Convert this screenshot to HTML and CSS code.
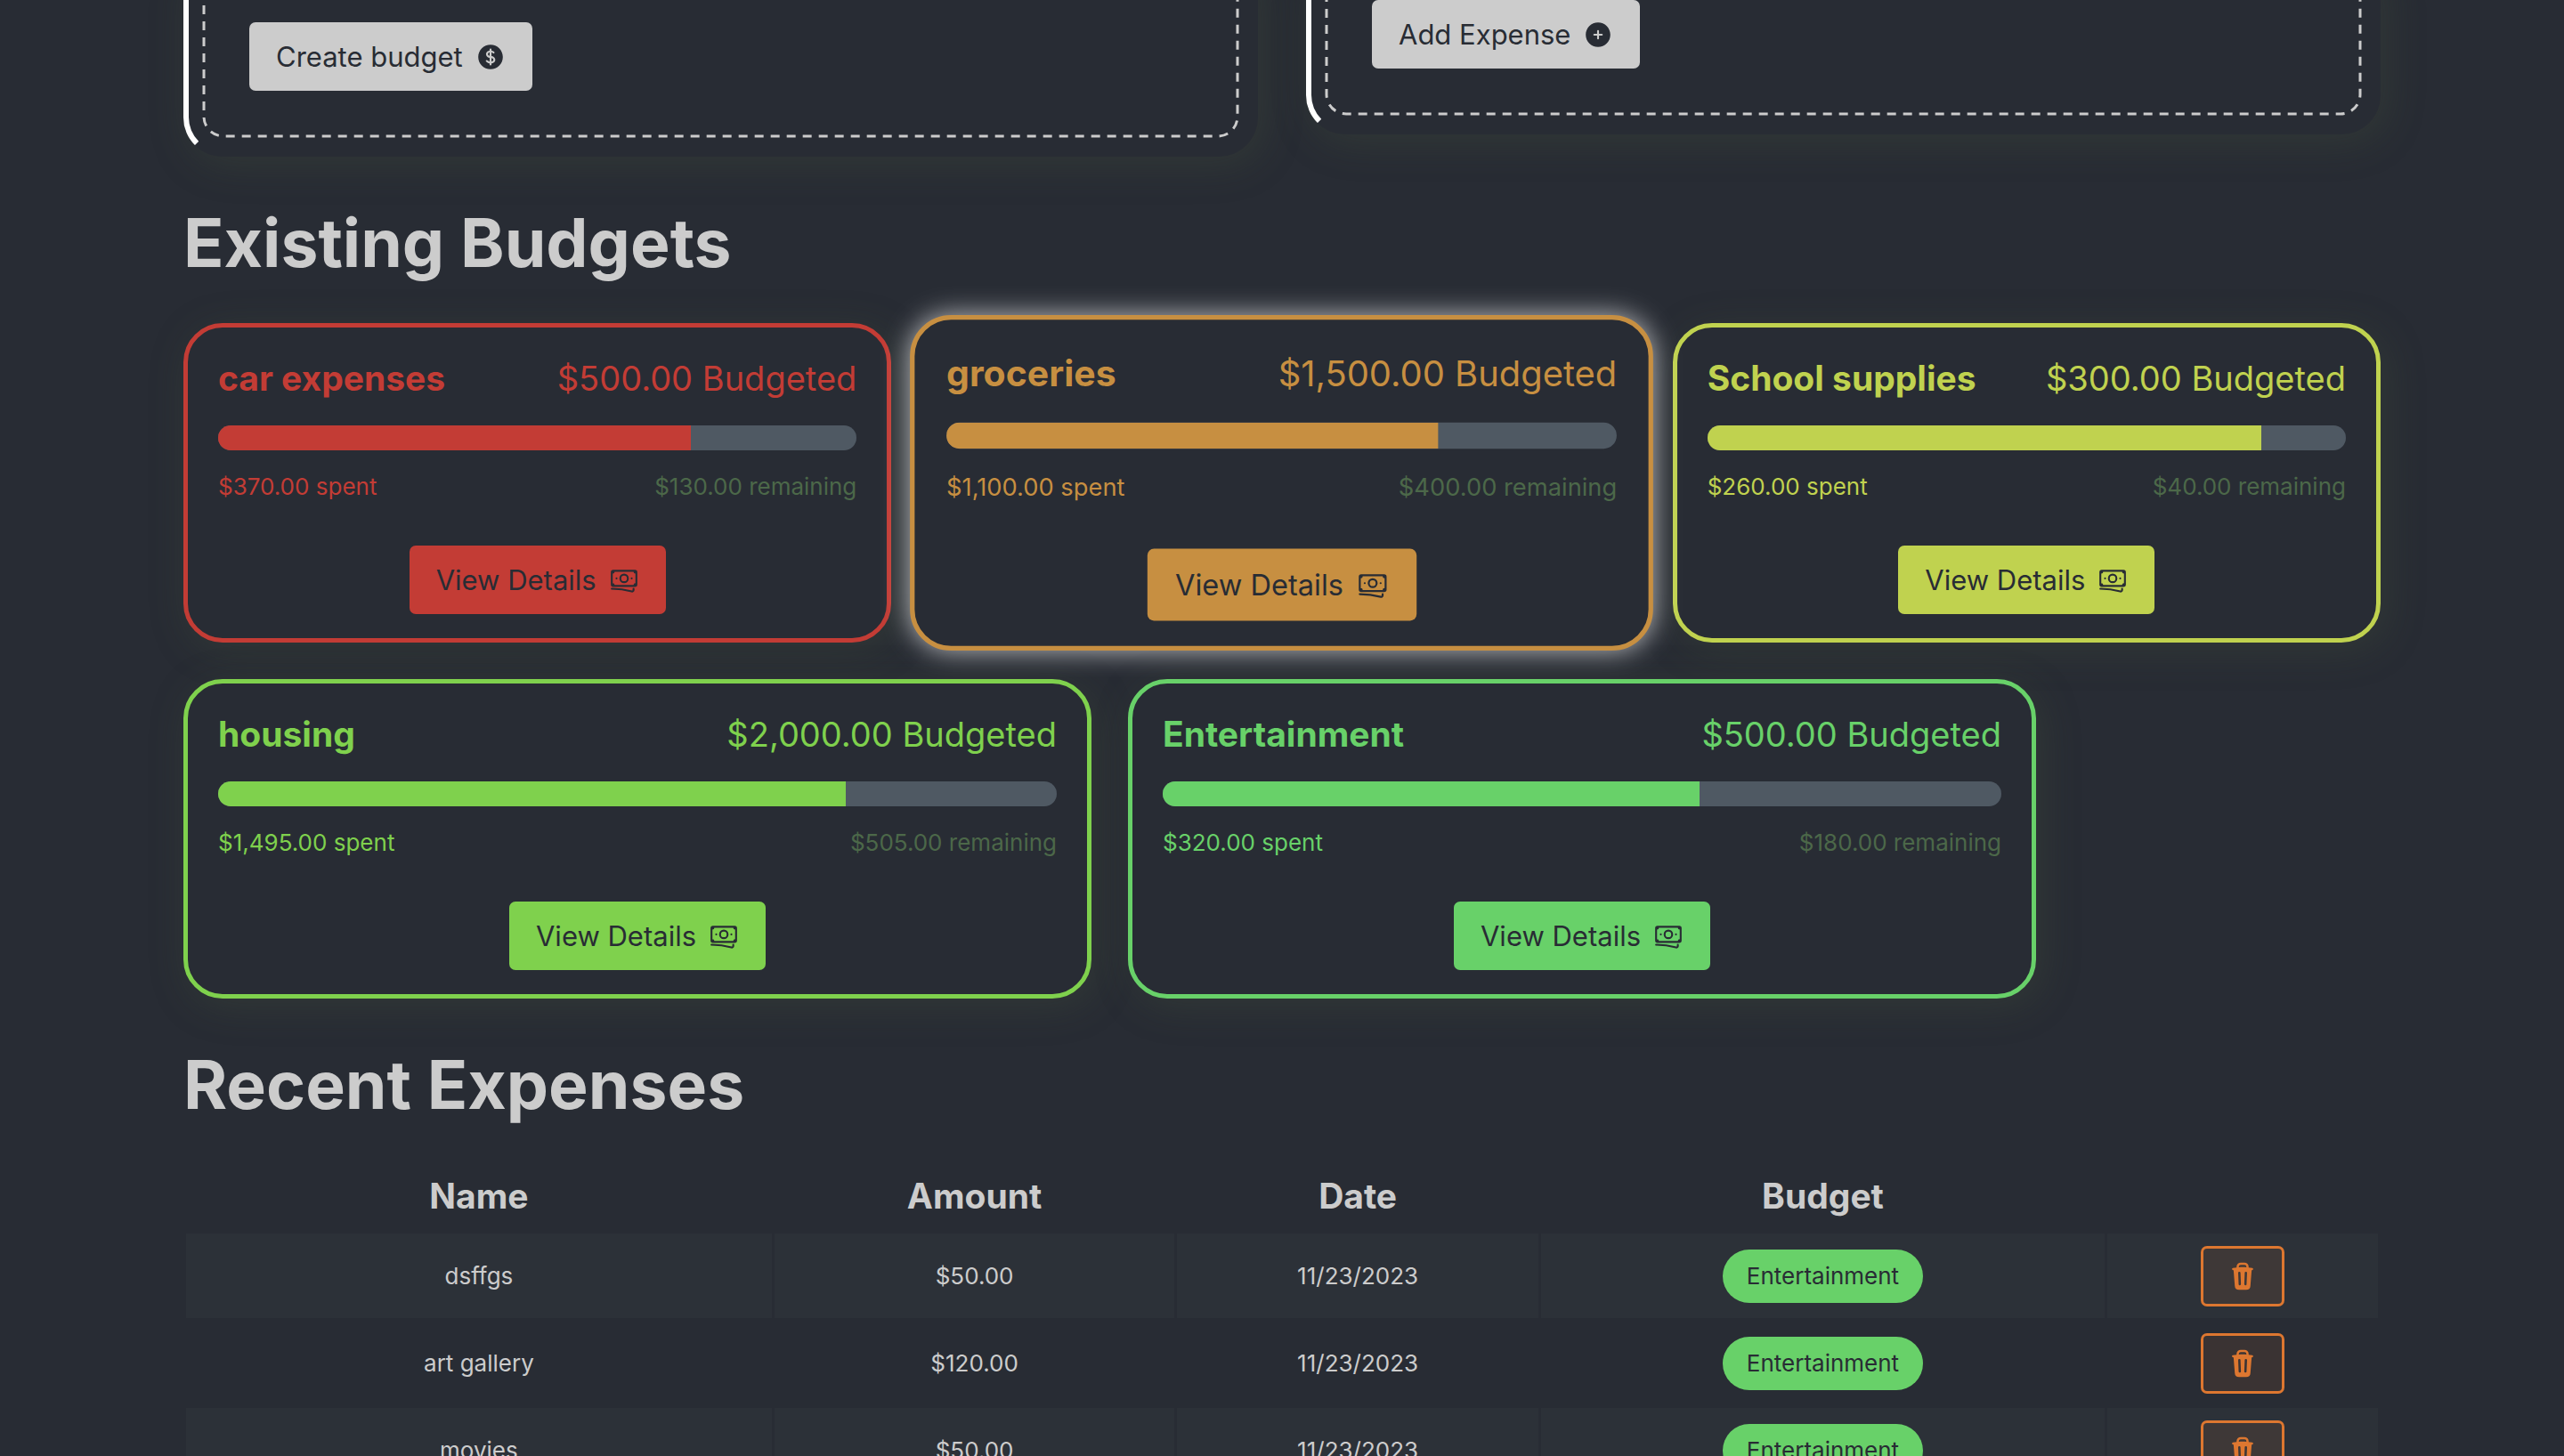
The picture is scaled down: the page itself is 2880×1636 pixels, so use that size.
FILE: index.html
```html
<!DOCTYPE html>
<html lang="en">
<head>
<meta charset="utf-8">
<meta name="viewport" content="width=device-width, initial-scale=1">
<title>Budgets</title>
<link rel="stylesheet" href="styles.css">
</head>
<body>
<svg class="sprite" aria-hidden="true">
  <symbol id="dollar" viewBox="0 0 24 24"><path d="M10.464 8.746c.227-.18.497-.311.786-.394v2.795a2.252 2.252 0 01-.786-.393c-.394-.313-.546-.681-.546-1.004 0-.323.152-.691.546-1.004zM12.75 15.662v-2.824c.347.085.664.228.921.421.427.32.579.686.579.991 0 .305-.152.671-.579.991a2.534 2.534 0 01-.921.42z"/><path fill-rule="evenodd" d="M12 2.25c-5.385 0-9.75 4.365-9.75 9.75s4.365 9.75 9.75 9.75 9.75-4.365 9.75-9.75S17.385 2.25 12 2.25zM12.75 6a.75.75 0 00-1.5 0v.816a3.836 3.836 0 00-1.72.756c-.712.566-1.112 1.35-1.112 2.178 0 .829.4 1.612 1.113 2.178.502.4 1.102.647 1.719.756v2.978a2.536 2.536 0 01-.921-.421l-.879-.66a.75.75 0 00-.9 1.2l.879.66c.533.4 1.169.645 1.821.75V18a.75.75 0 001.5 0v-.81a4.124 4.124 0 001.821-.749c.745-.559 1.179-1.344 1.179-2.191 0-.847-.434-1.632-1.179-2.191a4.122 4.122 0 00-1.821-.75V8.354c.29.082.559.213.786.393l.415.33a.75.75 0 00.933-1.175l-.415-.33a3.836 3.836 0 00-1.719-.755V6z"/></symbol>
  <symbol id="plus" viewBox="0 0 24 24"><path fill-rule="evenodd" d="M12 2.25c-5.385 0-9.75 4.365-9.75 9.75s4.365 9.75 9.75 9.75 9.75-4.365 9.75-9.75S17.385 2.25 12 2.25zM12.75 9a.75.75 0 00-1.5 0v2.25H9a.75.75 0 000 1.5h2.25V15a.75.75 0 001.5 0v-2.25H15a.75.75 0 000-1.5h-2.25V9z"/></symbol>
  <symbol id="banknotes" viewBox="0 0 24 24"><path fill="none" stroke="currentColor" stroke-width="1.5" stroke-linecap="round" stroke-linejoin="round" d="M2.25 18.75a60.07 60.07 0 0115.797 2.101c.727.198 1.453-.342 1.453-1.096V18.75M3.75 4.5v.75A.75.75 0 013 6h-.75m0 0v-.375c0-.621.504-1.125 1.125-1.125H20.25M2.25 6v9m18-10.5v.75c0 .414.336.75.75.75h.75m-1.5-1.5h.375c.621 0 1.125.504 1.125 1.125v9.75c0 .621-.504 1.125-1.125 1.125h-.375m1.5-1.5H21a.75.75 0 00-.75.75v.75m0 0H3.75m0 0h-.375a1.125 1.125 0 01-1.125-1.125V15m1.5 1.5v-.75A.75.75 0 003 15h-.75M15 10.5a3 3 0 11-6 0 3 3 0 016 0zm3 0h.008v.008H18V10.5zm-12 0h.008v.008H6V10.5z"/></symbol>
  <symbol id="trash" viewBox="0 0 20 20"><path fill-rule="evenodd" d="M8.75 1A2.75 2.75 0 006 3.75v.443c-.795.077-1.584.176-2.365.298a.75.75 0 10.23 1.482l.149-.022.841 10.518A2.75 2.75 0 007.596 19h4.807a2.75 2.75 0 002.742-2.53l.841-10.52.149.023a.75.75 0 00.23-1.482A41.03 41.03 0 0014 4.193V3.75A2.75 2.75 0 0011.25 1h-2.5zM10 4c.84 0 1.673.025 2.5.075V3.75c0-.69-.56-1.25-1.25-1.25h-2.5c-.69 0-1.25.56-1.25 1.25v.325C8.327 4.025 9.16 4 10 4zM8.58 7.72a.75.75 0 00-1.5.06l.3 7.5a.75.75 0 101.5-.06l-.3-7.5zm4.34.06a.75.75 0 10-1.5-.06l-.3 7.5a.75.75 0 101.5.06l.3-7.5z"/></symbol>
</svg>
<main class="page">
  <div class="forms">
    <form class="panel panel-budget">
      <svg class="dashes" aria-hidden="true"><rect/></svg>
      <button type="button" class="btn">Create budget<svg class="icon" aria-hidden="true"><use href="#dollar"/></svg></button>
    </form>
    <form class="panel panel-expense">
      <svg class="dashes" aria-hidden="true"><rect/></svg>
      <button type="button" class="btn">Add Expense<svg class="icon" aria-hidden="true"><use href="#plus"/></svg></button>
    </form>
  </div>

  <h2 class="heading">Existing Budgets</h2>
  <div class="budgets">
    <article class="card red">
      <div class="card-title"><h3>car expenses</h3><p>$500.00 Budgeted</p></div>
      <div class="bar"><div class="bar-fill" style="width:74%"></div></div>
      <div class="card-text"><small>$370.00 spent</small><small class="remaining">$130.00 remaining</small></div>
      <a class="btn card-btn" href="#car">View Details<svg class="icon" aria-hidden="true"><use href="#banknotes"/></svg></a>
    </article>
    <article class="card orange active">
      <div class="card-title"><h3>groceries</h3><p>$1,500.00 Budgeted</p></div>
      <div class="bar"><div class="bar-fill" style="width:73.3%"></div></div>
      <div class="card-text"><small>$1,100.00 spent</small><small class="remaining">$400.00 remaining</small></div>
      <a class="btn card-btn" href="#groceries">View Details<svg class="icon" aria-hidden="true"><use href="#banknotes"/></svg></a>
    </article>
    <article class="card yellow">
      <div class="card-title"><h3>School supplies</h3><p>$300.00 Budgeted</p></div>
      <div class="bar"><div class="bar-fill" style="width:86.7%"></div></div>
      <div class="card-text"><small>$260.00 spent</small><small class="remaining">$40.00 remaining</small></div>
      <a class="btn card-btn" href="#school">View Details<svg class="icon" aria-hidden="true"><use href="#banknotes"/></svg></a>
    </article>
    <article class="card lime">
      <div class="card-title"><h3>housing</h3><p>$2,000.00 Budgeted</p></div>
      <div class="bar"><div class="bar-fill" style="width:74.8%"></div></div>
      <div class="card-text"><small>$1,495.00 spent</small><small class="remaining">$505.00 remaining</small></div>
      <a class="btn card-btn" href="#housing">View Details<svg class="icon" aria-hidden="true"><use href="#banknotes"/></svg></a>
    </article>
    <article class="card green">
      <div class="card-title"><h3>Entertainment</h3><p>$500.00 Budgeted</p></div>
      <div class="bar"><div class="bar-fill" style="width:64%"></div></div>
      <div class="card-text"><small>$320.00 spent</small><small class="remaining">$180.00 remaining</small></div>
      <a class="btn card-btn" href="#entertainment">View Details<svg class="icon" aria-hidden="true"><use href="#banknotes"/></svg></a>
    </article>
  </div>

  <h2 class="heading">Recent Expenses</h2>
  <table class="expenses">
    <colgroup><col class="col-name"><col class="col-amount"><col class="col-date"><col class="col-budget"><col></colgroup>
    <thead>
      <tr><th>Name</th><th>Amount</th><th>Date</th><th>Budget</th><th></th></tr>
    </thead>
    <tbody>
      <tr>
        <td>dsffgs</td><td>$50.00</td><td>11/23/2023</td>
        <td><a class="pill" href="#entertainment">Entertainment</a></td>
        <td><button type="button" class="delete" aria-label="Delete dsffgs"><svg class="icon" aria-hidden="true"><use href="#trash"/></svg></button></td>
      </tr>
      <tr>
        <td>art gallery</td><td>$120.00</td><td>11/23/2023</td>
        <td><a class="pill" href="#entertainment">Entertainment</a></td>
        <td><button type="button" class="delete" aria-label="Delete art gallery"><svg class="icon" aria-hidden="true"><use href="#trash"/></svg></button></td>
      </tr>
      <tr>
        <td>movies</td><td>$50.00</td><td>11/23/2023</td>
        <td><a class="pill" href="#entertainment">Entertainment</a></td>
        <td><button type="button" class="delete" aria-label="Delete movies"><svg class="icon" aria-hidden="true"><use href="#trash"/></svg></button></td>
      </tr>
    </tbody>
  </table>
</main>
</body>
</html>
```

FILE: styles.css
```css
:root {
  --bg: #282c34;
  --text: #cccccc;
  --track: #4f5963;
  --muted: #4c6849;
  --shadow: 6px 8px 44px rgba(77, 91, 60, 0.26);
}

* {
  box-sizing: border-box;
  margin: 0;
  padding: 0;
}

body {
  background: var(--bg);
  color: var(--text);
  font-family: Inter, "Liberation Sans", sans-serif;
  font-size: 26px;
  line-height: 40px;
  overflow-x: hidden;
}

.sprite {
  position: absolute;
  width: 0;
  height: 0;
}

.icon {
  width: 34px;
  height: 34px;
  fill: currentColor;
  flex: none;
}

.page {
  padding: 0 206px 48px;
}

/* Entry forms */
.forms {
  display: grid;
  grid-template-columns: 1fr 1fr;
  align-items: start;
  gap: 54px;
  margin-top: -54px;
}

.panel {
  position: relative;
  padding: 48px 68px 68px;
  border: 6px solid transparent;
  border-left-color: #ffffff;
  border-radius: 44px;
  background: var(--bg);
  box-shadow: var(--shadow);
}

/* Dashed frame laid over the panel, inside its edge */
.dashes {
  position: absolute;
  top: 15px;
  left: 15px;
  width: calc(100% - 30px);
  height: calc(100% - 30px);
  overflow: visible;
  pointer-events: none;
}

.dashes rect {
  x: 2px;
  y: 2px;
  width: calc(100% - 4px);
  height: calc(100% - 4px);
  rx: 22px;
  fill: none;
  stroke: var(--text);
  stroke-width: 3px;
  stroke-dasharray: 10px 8px;
}

.panel-budget {
  padding-top: 73px;
}

.btn {
  display: inline-flex;
  align-items: center;
  gap: 14px;
  height: 77px;
  padding: 0 30px;
  border: 0;
  border-radius: 7px;
  background: var(--text);
  color: var(--bg);
  font: inherit;
  font-size: 31px;
  text-decoration: none;
  vertical-align: top;
}

.heading {
  margin: 55px 0 48px;
  font-size: 75px;
  font-weight: 700;
  line-height: 84px;
}

/* Budget cards */
.budgets {
  display: flex;
  flex-wrap: wrap;
  gap: 41px;
}

.card {
  display: flex;
  flex: 1 1 740px;
  flex-direction: column;
  gap: 21px;
  max-width: 1020px;
  padding: 27px 34px;
  border: 5px solid var(--accent);
  border-radius: 44px;
  background: var(--bg);
  color: var(--accent);
  box-shadow: var(--shadow);
}

.card.active {
  position: relative;
  transform: scale(1.05);
  box-shadow: 0 0 28px rgba(255, 255, 255, 0.7);
}

.red { --accent: #c33c35; }
.orange { --accent: #c78f41; }
.yellow { --accent: #c0d24f; }
.lime { --accent: #7fd14d; }
.green { --accent: #68d169; }

.card-title,
.card-text {
  display: flex;
  justify-content: space-between;
}

.card-title {
  padding-bottom: 2px;
  font-size: 38px;
  line-height: 60px;
}

.card-title h3 {
  font-size: 39px;
  font-weight: 700;
}

.card-text small {
  font-size: 26px;
}

.card-text .remaining {
  color: var(--muted);
}

.bar {
  height: 28px;
  border-radius: 14px;
  background: var(--track);
  overflow: hidden;
}

.bar-fill {
  height: 100%;
  background: var(--accent);
}

.card-btn {
  align-self: center;
  margin-top: 25px;
  background: var(--accent);
}

/* Expense table */
.expenses {
  width: 100%;
  table-layout: fixed;
  border-collapse: separate;
  border-spacing: 3px;
  text-align: center;
}

.col-name { width: 26.85%; }
.col-amount { width: 18.35%; }
.col-date { width: 16.55%; }
.col-budget { width: 25.85%; }

.expenses th {
  height: 71px;
  padding-bottom: 8px;
  font-size: 39px;
  font-weight: 700;
}

.expenses td {
  height: 95px;
  vertical-align: middle;
}

.expenses tbody tr:nth-child(odd) td {
  background: #2c3138;
}

.pill {
  display: inline-block;
  padding: 10px 27px;
  border-radius: 30px;
  background: #68d169;
  color: var(--bg);
  text-decoration: none;
  vertical-align: middle;
}

.delete {
  display: inline-flex;
  align-items: center;
  justify-content: center;
  width: 94px;
  height: 68px;
  border: 3px solid #dd7730;
  border-radius: 7px;
  background: rgba(221, 119, 48, 0.1);
  color: #dd7730;
  vertical-align: middle;
}
```
